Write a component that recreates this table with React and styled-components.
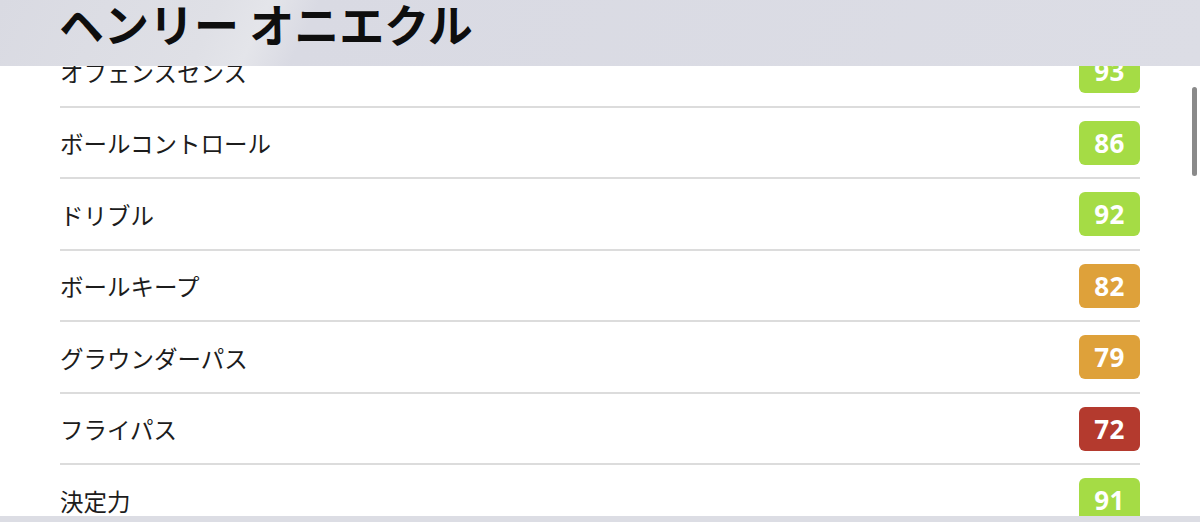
import React from "react";
import styled, { createGlobalStyle } from "styled-components";

const Global = createGlobalStyle`
  html, body { margin: 0; padding: 0; background: #ffffff; }
  body { width: 1200px; height: 522px; overflow: hidden; }
`;

const Page = styled.div`
  width: 1200px;
  height: 522px;
  display: flex;
  flex-direction: column;
  background: #ffffff;
  font-family: "Noto Sans CJK JP", "Noto Sans", sans-serif;
`;

const Viewport = styled.div`
  position: relative;
  flex: 1;
  overflow: hidden;
`;

const Header = styled.div`
  position: absolute;
  top: 0;
  left: 0;
  right: 0;
  height: 66px;
  z-index: 2;
  display: flex;
  align-items: center;
  padding-left: 59px;
  background: linear-gradient(115deg, #d9dae2 0%, #dfe0e6 18%, #e4e5ea 22%, #d9dae3 26%, #dcdde5 100%);
`;

const Title = styled.h1`
  margin: 0;
  margin-top: -20px;
  font-family: "Noto Sans CJK JP", sans-serif;
  font-weight: 700;
  font-size: 45px;
  letter-spacing: 0;
  color: #0e0e0e;
  line-height: 1;
`;

const List = styled.div`
  display: flex;
  flex-direction: column;
  padding: 36px 60px 0 60px;
`;

const Row = styled.div`
  height: 71.5px;
  box-sizing: border-box;
  display: flex;
  align-items: center;
  justify-content: space-between;
  border-bottom: 2px solid #dcdcdc;
`;

const Label = styled.span`
  font-family: "Noto Sans CJK JP", sans-serif;
  font-size: 23.5px;
  font-weight: 400;
  color: #1c1c1c;
  margin-top: 2px;
`;

const Badge = styled.span`
  width: 61px;
  height: 44px;
  border-radius: 6px;
  background: ${(p) => p.$bg};
  color: #ffffff;
  display: flex;
  align-items: center;
  justify-content: center;
  font-family: "Noto Sans", sans-serif;
  font-weight: 700;
  font-size: 26px;
  letter-spacing: 0.5px;
  margin-top: 1px;
`;

const ScrollThumb = styled.div`
  position: absolute;
  right: 3px;
  top: 87px;
  width: 5px;
  height: 89px;
  border-radius: 3px;
  background: #8a8a8a;
  z-index: 3;
`;

const BottomBar = styled.div`
  height: 6px;
  background: #dcdde4;
`;

const colors = {
  green: "#a5dc45",
  orange: "#dea13a",
  red: "#b43a2e",
};

const tone = (v) => (v >= 85 ? colors.green : v >= 75 ? colors.orange : colors.red);

const stats = [
  ["オフェンスセンス", 93],
  ["ボールコントロール", 86],
  ["ドリブル", 92],
  ["ボールキープ", 82],
  ["グラウンダーパス", 79],
  ["フライパス", 72],
  ["決定力", 91],
];

export default function App() {
  return (
    <Page>
      <Global />
      <Viewport>
        <Header>
          <Title>ヘンリー オニエクル</Title>
        </Header>
        <List>
          {stats.map(([name, v]) => (
            <Row key={name}>
              <Label>{name}</Label>
              <Badge $bg={tone(v)}>{v}</Badge>
            </Row>
          ))}
        </List>
        <ScrollThumb />
      </Viewport>
      <BottomBar />
    </Page>
  );
}
